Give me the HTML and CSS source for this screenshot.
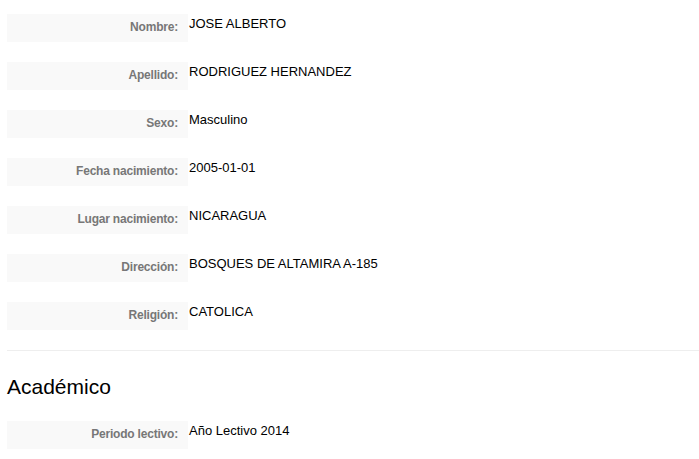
FILE: index.html
```html
<!DOCTYPE html>
<html lang="es">
<head>
<meta charset="utf-8">
<title>Ficha</title>
<link rel="stylesheet" href="styles.css">
</head>
<body>
<div class="page">
  <dl class="fields">
    <div class="field"><dt>Nombre:</dt><dd>JOSE ALBERTO</dd></div>
    <div class="field"><dt>Apellido:</dt><dd>RODRIGUEZ HERNANDEZ</dd></div>
    <div class="field"><dt>Sexo:</dt><dd>Masculino</dd></div>
    <div class="field"><dt>Fecha nacimiento:</dt><dd>2005-01-01</dd></div>
    <div class="field"><dt>Lugar nacimiento:</dt><dd>NICARAGUA</dd></div>
    <div class="field"><dt>Dirección:</dt><dd>BOSQUES DE ALTAMIRA A-185</dd></div>
    <div class="field"><dt>Religión:</dt><dd>CATOLICA</dd></div>
  </dl>
  <hr class="divider">
  <h2 class="section-title">Académico</h2>
  <dl class="fields">
    <div class="field"><dt>Periodo lectivo:</dt><dd>Año Lectivo 2014</dd></div>
  </dl>
</div>
</body>
</html>
```
FILE: styles.css
```css
html, body {
  margin: 0;
  padding: 0;
  background: #fff;
}
body {
  font-family: "Liberation Sans", Arial, sans-serif;
  color: #000;
  overflow: hidden;
}
.page {
  padding: 14px 0 0 7px;
}
.fields {
  margin: 0;
  display: flex;
  flex-direction: column;
  gap: 20px;
}
.field {
  display: flex;
  align-items: flex-start;
}
.field dt {
  width: 181px;
  height: 28px;
  box-sizing: border-box;
  background: #f9f9f9;
  text-align: right;
  padding: 6px 10px 0 0;
  font-size: 12px;
  letter-spacing: -0.2px;
  line-height: 14px;
  font-weight: bold;
  color: #777;
}
.field dd {
  margin: 0;
  padding: 2px 0 0 1px;
  font-size: 13px;
  line-height: 15px;
  color: #000;
}
.divider {
  margin: 20px 0 0 0;
  border: 0;
  border-top: 1px solid #eee;
  height: 0;
}
.section-title {
  margin: 24px 0 0 0;
  font-size: 21px;
  font-weight: normal;
  line-height: 24px;
}
.section-title + .fields {
  margin-top: 22px;
}
```
